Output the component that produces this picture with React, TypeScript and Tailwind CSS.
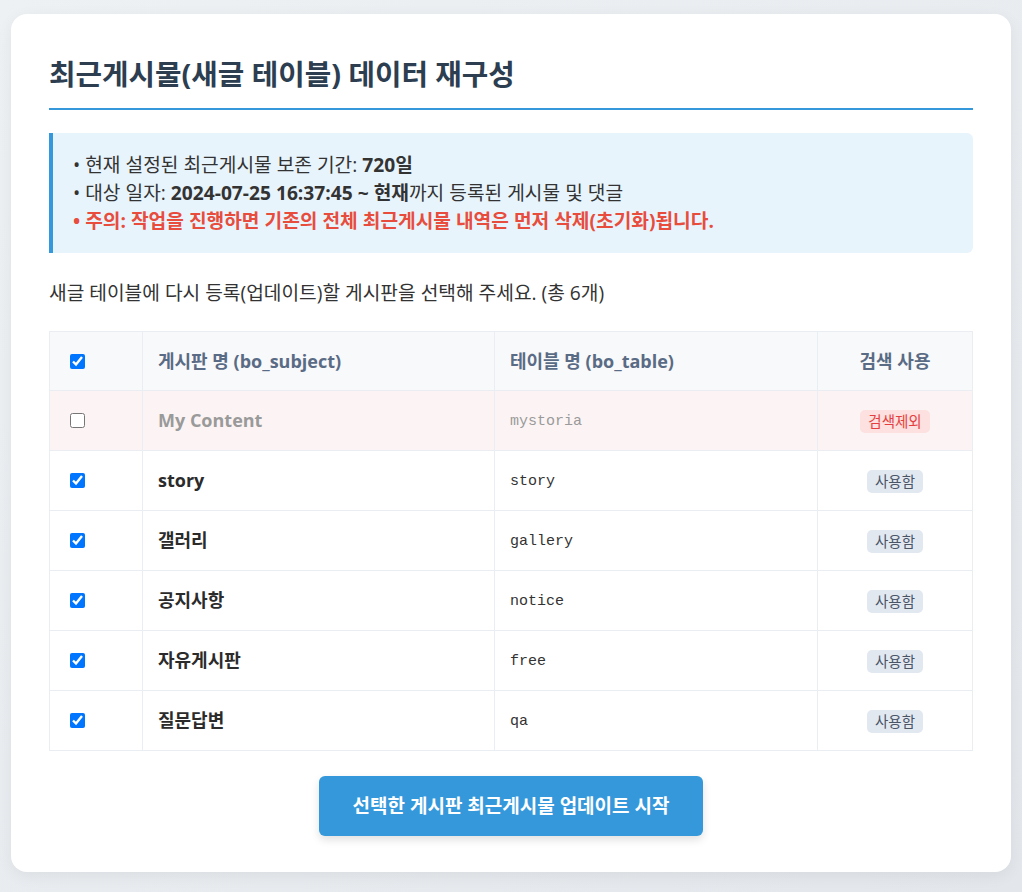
import { useState } from 'react';

type Board = {
  subject: string;
  table: string;
  searchable: boolean;
};

const boards: Board[] = [
  { subject: 'My Content', table: 'mystoria', searchable: false },
  { subject: 'story', table: 'story', searchable: true },
  { subject: '갤러리', table: 'gallery', searchable: true },
  { subject: '공지사항', table: 'notice', searchable: true },
  { subject: '자유게시판', table: 'free', searchable: true },
  { subject: '질문답변', table: 'qa', searchable: true },
];

export default function App() {
  const [checked, setChecked] = useState<Record<string, boolean>>(() =>
    Object.fromEntries(boards.map((b) => [b.table, b.searchable])),
  );
  const allChecked = boards.filter((b) => b.searchable).every((b) => checked[b.table]);

  function toggleAll() {
    const next = !allChecked;
    setChecked(Object.fromEntries(boards.map((b) => [b.table, next && b.searchable])));
  }

  return (
    <div className="min-h-screen bg-gradient-to-br from-[#eef1f4] to-[#e3e7eb] px-[11px] pt-[14px] pb-5 font-['Open_Sans','Noto_Sans_CJK_KR',sans-serif]">
      <div className="mx-auto max-w-[1000px] rounded-2xl bg-white px-[38px] pt-[44px] pb-[36px] shadow-[0_4px_16px_rgba(0,0,0,0.06)]">
        <h1 className="border-b-2 border-[#3498db] pb-[18px] text-[28.8px] font-bold leading-[32px] text-[#2c3e50]">
          최근게시물(새글 테이블) 데이터 재구성
        </h1>

        <div className="mt-[23px] rounded-r-md border-l-4 border-[#3498db] bg-[#e8f4fc] py-[18px] pl-[20px] pr-5 text-[19.2px] leading-[28px] text-[#333]">
          <ul>
            <li>• 현재 설정된 최근게시물 보존 기간: <b>720일</b></li>
            <li>
              • 대상 일자: <b>2024-07-25 16:37:45 ~ 현재</b>까지 등록된 게시물 및 댓글
            </li>
            <li className="font-bold text-[#e74c3c]">
              • 주의: 작업을 진행하면 기존의 전체 최근게시물 내역은 먼저 삭제(초기화)됩니다.
            </li>
          </ul>
        </div>

        <p className="mt-[26px] text-[19.2px] leading-[28px] text-[#333]">
          새글 테이블에 다시 등록(업데이트)할 게시판을 선택해 주세요. (총 6개)
        </p>

        <table className="mt-[24px] w-full border-collapse">
          <thead>
            <tr className="h-[59px] bg-[#f8f9fa] text-[18px] text-[#5a6b85]">
              <th className="w-[93px] border border-[#eaedf1] pl-[20px] text-left">
                <input
                  type="checkbox"
                  checked={allChecked}
                  onChange={toggleAll}
                  className="block size-[15px] accent-[#0075ff]"
                />
              </th>
              <th className="w-[352px] border border-[#eaedf1] px-[15px] text-left font-bold">게시판 명 (bo_subject)</th>
              <th className="w-[323px] border border-[#eaedf1] px-[15px] text-left font-bold">테이블 명 (bo_table)</th>
              <th className="border border-[#eaedf1] text-center font-bold">검색 사용</th>
            </tr>
          </thead>
          <tbody>
            {boards.map((b) => (
              <tr key={b.table} className={`h-[60px] ${b.searchable ? 'bg-white' : 'bg-[#fcf4f4]'}`}>
                <td className="border border-[#eaedf1] pl-[20px]">
                  <input
                    type="checkbox"
                    checked={!!checked[b.table]}
                    onChange={() => setChecked((c) => ({ ...c, [b.table]: !c[b.table] }))}
                    className="block size-[15px] accent-[#0075ff]"
                  />
                </td>
                <td
                  className={`border border-[#eaedf1] px-[15px] text-[18px] font-bold ${
                    b.searchable ? 'text-[#2b2b2b]' : 'text-[#9a9a9a]'
                  }`}
                >
                  {b.subject}
                </td>
                <td
                  className={`border border-[#eaedf1] px-[15px] pt-[4px] font-['Liberation_Mono',monospace] text-[15px] ${
                    b.searchable ? 'text-[#333]' : 'text-[#9a9a9a]'
                  }`}
                >
                  {b.table}
                </td>
                <td className="border border-[#eaedf1] text-center">
                  {b.searchable ? (
                    <span className="inline-block rounded-[5px] bg-[#e2e8f0] px-[8px] py-[1px] text-[14.5px] leading-[21px] text-[#4a5568]">
                      사용함
                    </span>
                  ) : (
                    <span className="inline-block rounded-[5px] bg-[#fde0e0] px-[8px] py-[1px] text-[14.5px] leading-[21px] text-[#e53e3e]">
                      검색제외
                    </span>
                  )}
                </td>
              </tr>
            ))}
          </tbody>
        </table>

        <div className="mt-[25px] flex justify-center">
          <button
            type="button"
            className="h-[60px] w-[384px] rounded-md bg-[#3498db] text-[19px] font-bold text-white shadow-[0_4px_8px_rgba(0,0,0,0.12)] transition hover:bg-[#2d86c4]"
          >
            선택한 게시판 최근게시물 업데이트 시작
          </button>
        </div>
      </div>
    </div>
  );
}
